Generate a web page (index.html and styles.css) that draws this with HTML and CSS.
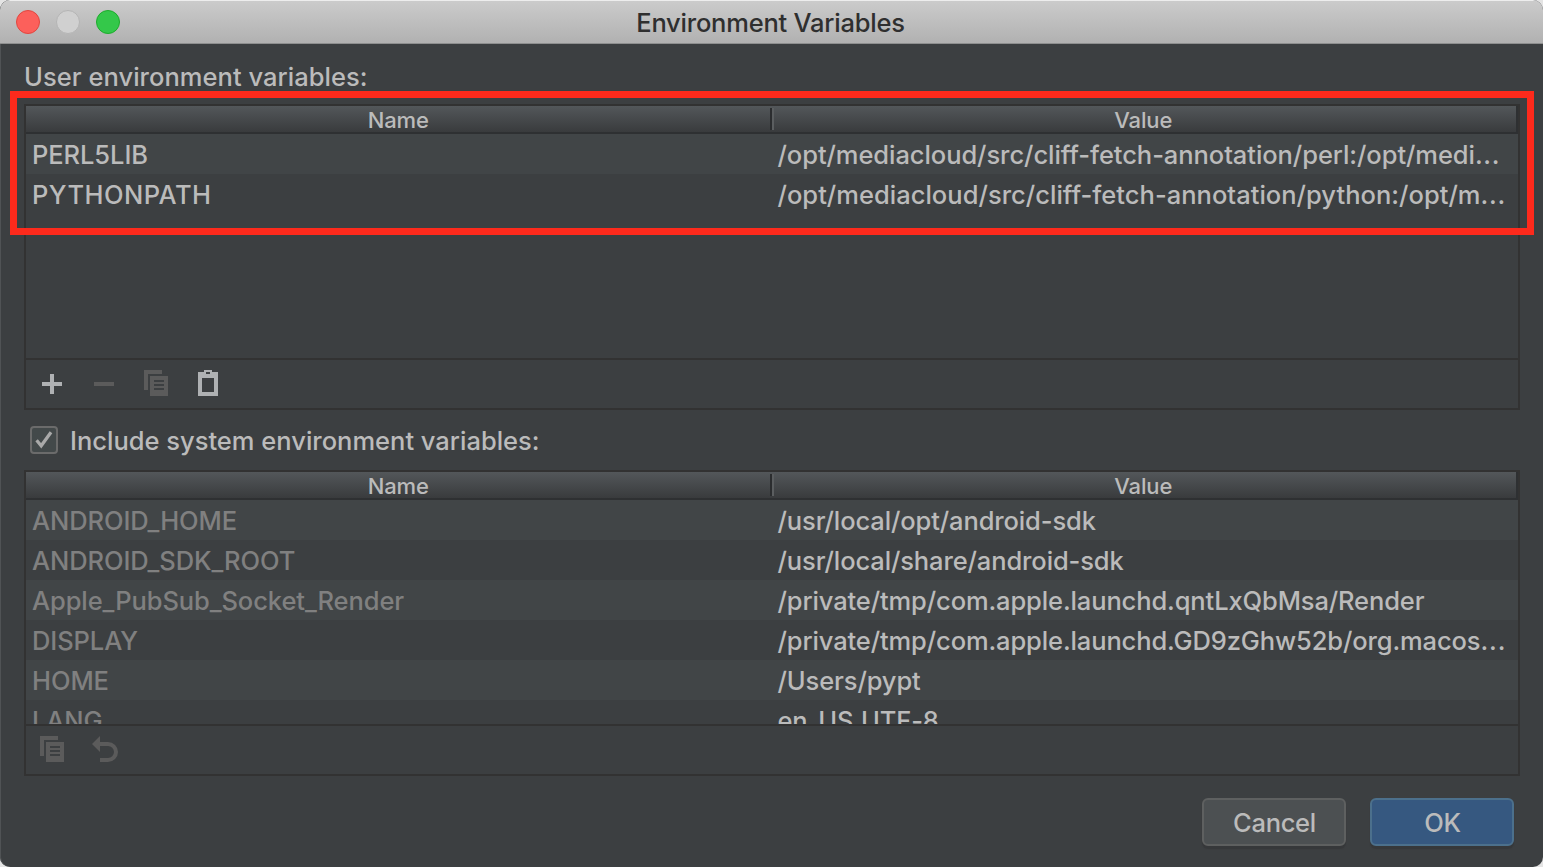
FILE: index.html
```html
<!DOCTYPE html>
<html lang="en">
<head>
<meta charset="utf-8">
<title>Environment Variables</title>
<link rel="stylesheet" href="styles.css">
</head>
<body>
<div class="dialog">
  <header class="titlebar">
    <div class="lights"><span class="light close"></span><span class="light minimize"></span><span class="light maximize"></span></div>
    <h1 class="title">Environment Variables</h1>
  </header>
  <main class="content">
    <p class="caption">User environment variables:</p>
    <section class="panel user">
      <div class="thead"><div class="th"><span>Name</span></div><div class="th value-head"><span>Value</span></div></div>
      <div class="rows">
        <div class="row"><span class="name">PERL5LIB</span><span class="value snug">/opt/mediacloud/src/cliff-fetch-annotation/perl:/opt/medi<span class="dots">...</span></span></div>
        <div class="row"><span class="name wide">PYTHONPATH</span><span class="value">/opt/mediacloud/src/cliff-fetch-annotation/python:/opt/m<span class="dots">...</span></span></div>
      </div>
      <div class="toolbar">
        <svg class="icon on" viewBox="0 0 32 32"><path d="M14 6h4v8h8v4h-8v8h-4v-8H6v-4h8z"/></svg>
        <svg class="icon" viewBox="0 0 32 32"><path d="M6 14h20v4H6z"/></svg>
        <svg class="icon" viewBox="0 0 32 32"><path d="M4 2h18v4H8v16H4z"/><path fill-rule="evenodd" d="M10 8h18v20H10zM14 12v2h10v-2zM14 16v2h10v-2zM14 20v2h10v-2z"/></svg>
        <svg class="icon on" viewBox="0 0 32 32"><path fill-rule="evenodd" d="M6 4h6V2h8v2h6v24H6zM10 10v14h12V10zM14 4v2h4V4z"/></svg>
      </div>
    </section>
    <label class="check-row">
      <span class="checkbox"><svg viewBox="0 0 28 28"><path d="M6.6 14.2l4.6 5.6L21 6.2"/></svg></span>
      <span class="check-label">Include system environment variables:</span>
    </label>
    <section class="panel system">
      <div class="thead"><div class="th"><span>Name</span></div><div class="th value-head"><span>Value</span></div></div>
      <div class="rows">
        <div class="row"><span class="name">ANDROID_HOME</span><span class="value">/usr/local/opt/android-sdk</span></div>
        <div class="row"><span class="name">ANDROID_SDK_ROOT</span><span class="value">/usr/local/share/android-sdk</span></div>
        <div class="row"><span class="name">Apple_PubSub_Socket_Render</span><span class="value">/private/tmp/com.apple.launchd.qntLxQbMsa/Render</span></div>
        <div class="row"><span class="name">DISPLAY</span><span class="value">/private/tmp/com.apple.launchd.GD9zGhw52b/org.macos<span class="dots">...</span></span></div>
        <div class="row"><span class="name">HOME</span><span class="value">/Users/pypt</span></div>
        <div class="row"><span class="name">LANG</span><span class="value">en_US.UTF-8</span></div>
      </div>
      <div class="toolbar">
        <svg class="icon" viewBox="0 0 32 32"><path d="M4 2h18v4H8v16H4z"/><path fill-rule="evenodd" d="M10 8h18v20H10zM14 12v2h10v-2zM14 16v2h10v-2zM14 20v2h10v-2z"/></svg>
        <svg class="icon" viewBox="0 0 32 32"><path d="M4 10l8-8v6h8a10 10 0 0 1 0 20h-8v-4h8a6 6 0 0 0 0-12h-8v6z"/></svg>
      </div>
    </section>
    <footer class="actions">
      <button class="btn">Cancel</button>
      <button class="btn primary">OK</button>
    </footer>
  </main>
  <div class="highlight"></div>
</div>
</body>
</html>
```
FILE: styles.css
```css
* { box-sizing: border-box; }
body { margin: 0; background: #e4e4e4; overflow: hidden; }
.dialog {
  position: relative;
  width: 1543px;
  height: 867px;
  background: #3c3f41;
  border-radius: 10px;
  overflow: hidden;
  font: 450 25.5px/40px Inter, "Liberation Sans", sans-serif;
  color: #bbb;
  box-shadow: inset 1px 0 #505355;
}
.titlebar {
  display: grid;
  grid-template-columns: 1fr auto 1fr;
  align-items: center;
  height: 44px;
  padding: 0 18px 0 16px;
  background: linear-gradient(#cbcbcb, #b1b1b1);
  border-top: 1px solid #ededed;
  border-bottom: 1px solid #8e8f8f;
}
.lights { display: flex; gap: 16px; }
.light { width: 24px; height: 24px; border-radius: 50%; border: 1px solid; }
.close { background: #fc605b; border-color: #e2463f; }
.minimize { background: #d0d0d0; border-color: #b4b4b4; }
.maximize { background: #34c84a; border-color: #1dac2c; }
.title { margin: 0; padding-top: 2px; font-size: 25.5px; font-weight: 450; letter-spacing: -.22px; line-height: 40px; color: #2f2f2f; }
.content { display: flex; flex-direction: column; padding: 13px 24px 0; }
.caption { margin: 0 0 7px; letter-spacing: .04px; }
.panel {
  display: flex;
  flex-direction: column;
  width: 1496px;
  height: 306px;
  border: 2px solid #323232;
}
.thead {
  display: flex;
  height: 28px;
  border-bottom: 2px solid #2e3032;
  border-right: 2px solid #2e3032;
  background: linear-gradient(#53575a, #393b3d);
  font-size: 22px;
  line-height: 28px;
  letter-spacing: -.1px;
}
.th { width: 745px; text-align: center; }
.value-head { position: relative; width: 746px; }
.value-head::before {
  content: "";
  position: absolute;
  left: -1px;
  top: 2px;
  width: 4px;
  height: 22px;
  background: linear-gradient(90deg, #2b2d2f 50%, #5b5e60 50%);
}
.rows { flex: 1; min-height: 0; overflow: hidden; }
.row { display: flex; height: 40px; padding-left: 6px; line-height: 42px; white-space: nowrap; }
.row:nth-child(odd) { background: #414547; }
.name { width: 745.5px; letter-spacing: -.08px; }
.wide { letter-spacing: .45px; }
.value { flex: 1; letter-spacing: .02px; }
.snug { letter-spacing: -.07px; }
.dots { letter-spacing: .7px; }
.system .name { color: #808080; }
.system .value { letter-spacing: -.12px; }
.system .dots { letter-spacing: .9px; }
.toolbar {
  display: flex;
  gap: 20px;
  height: 50px;
  padding: 8px 10px;
  border-top: 2px solid #323232;
}
.icon { width: 32px; height: 32px; fill: #5b5b5b; }
.icon.on { fill: #afb1b3; }
.check-row { display: flex; align-items: center; gap: 12px; height: 60px; padding-left: 6px; }
.check-label { padding-top: 2px; }
.checkbox {
  width: 28px;
  height: 28px;
  border: 2px solid #6b6b6b;
  border-radius: 4px;
  background: #43494a;
}
.checkbox svg { display: block; margin: -2px; width: 28px; height: 28px; fill: none; stroke: #a9a9a9; stroke-width: 3.2; }
.actions { display: flex; justify-content: flex-end; gap: 24px; padding: 22px 5px 0 0; }
.btn {
  width: 144px;
  height: 48px;
  padding: 2px 0 0 1px;
  border: 2px solid #5e6060;
  border-radius: 6px;
  background: #4c5052;
  box-shadow: 0 3px 1px #36383a;
  color: #bbb;
  font: inherit;
  letter-spacing: -.3px;
}
.primary { background: #365880; border-color: #4c708c; }
.highlight {
  position: absolute;
  left: 10px;
  top: 91px;
  width: 1524px;
  height: 144px;
  border: 7px solid #fd2a1c;
}
```
